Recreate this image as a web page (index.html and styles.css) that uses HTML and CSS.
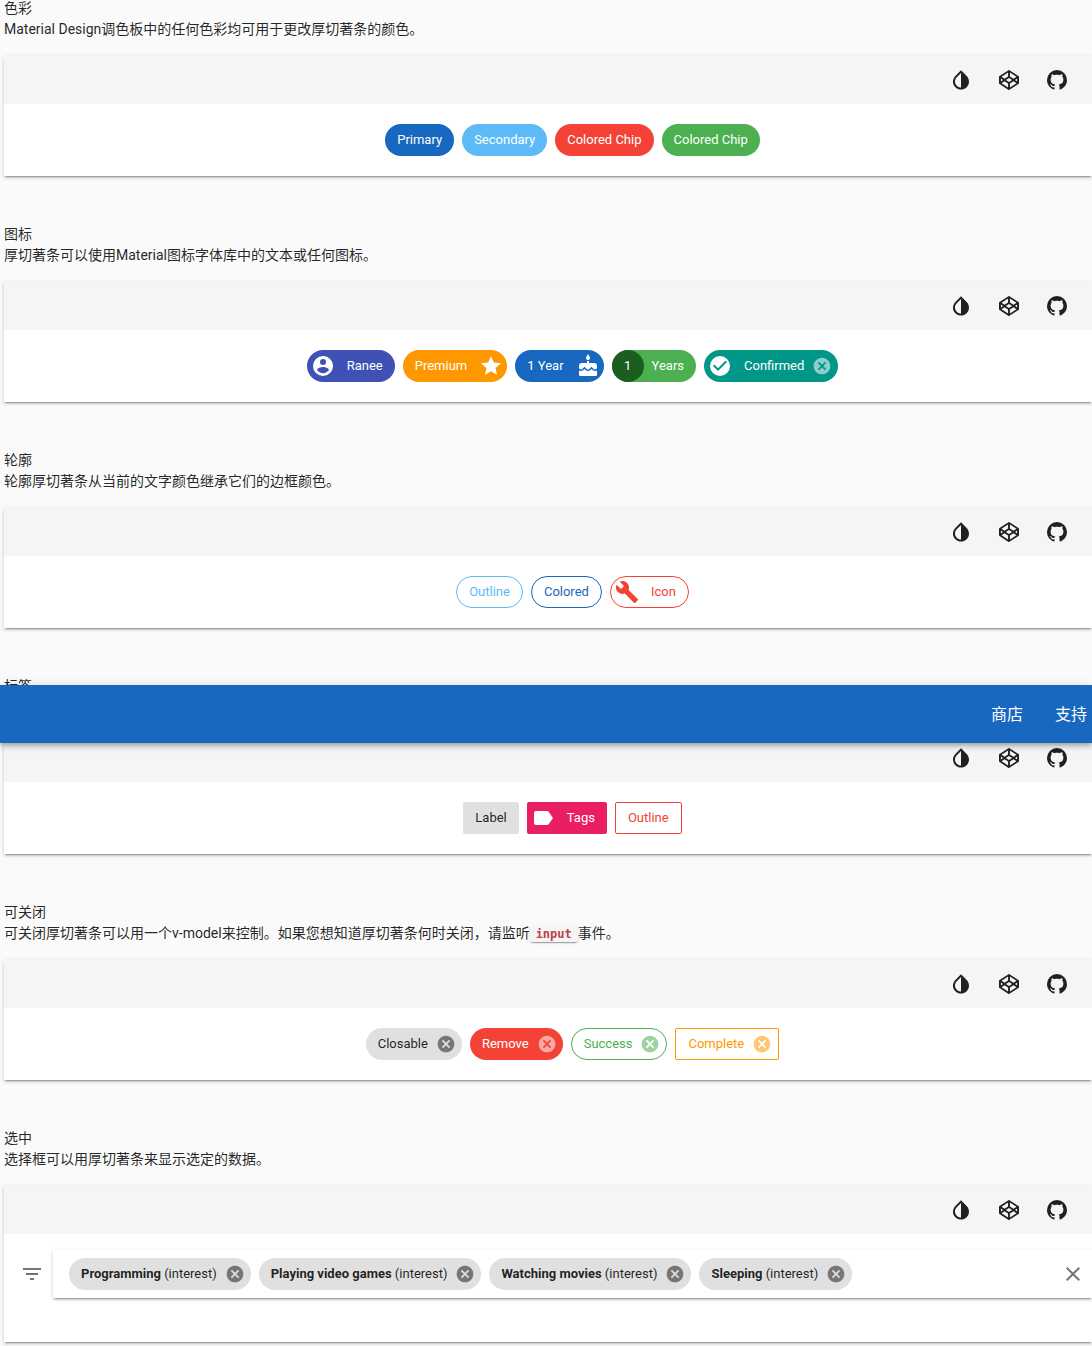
FILE: index.html
```html
<!DOCTYPE html>
<html lang="zh">
<head>
<meta charset="utf-8">
<title>厚切著条</title>
<link rel="stylesheet" href="styles.css">
</head>
<body>
<svg class="defs" width="0" height="0" aria-hidden="true">
  <symbol id="i-invert" viewBox="0 0 24 24"><path d="M12,19.58V19.58C10.4,19.58 8.89,18.96 7.76,17.83C6.62,16.69 6,15.19 6,13.58C6,12 6.62,10.47 7.76,9.34L12,5.1M17.66,7.93L12,2.27V2.27L6.34,7.93C3.22,11.05 3.22,16.12 6.34,19.24C7.9,20.8 9.95,21.58 12,21.58C14.05,21.58 16.1,20.8 17.66,19.24C20.78,16.12 20.78,11.05 17.66,7.93Z"/></symbol>
  <symbol id="i-codepen" viewBox="0 0 24 24"><path d="M15.09,12L12,14.08V14.08L8.91,12L12,9.92V9.92L15.09,12M12,2C11.84,2 11.68,2.06 11.53,2.15L2.5,8.11C2.27,8.22 2.09,8.43 2,8.67V14.92C2,15.33 2,15.33 2.15,15.53C2.25,15.69 2.39,15.84 2.53,15.94L11.53,21.89C11.67,22 11.84,22 12,22C12.16,22 12.33,21.96 12.47,21.85L21.47,15.91C21.61,15.81 21.75,15.66 21.85,15.5C22,15.31 22,15.31 22,14.92V8.67C21.91,8.43 21.73,8.22 21.5,8.11L12.47,2.15C12.32,2.06 12.16,2 12,2M12.94,4.5L19.5,8.84L16.5,10.87L12.94,8.5V4.5M11.06,4.5V8.5L7.5,10.87L4.5,8.84L11.06,4.5M20.09,10.62V13.38L18.03,12L20.09,10.62M3.91,10.62L5.97,12L3.91,13.38V10.62M16.5,13.13L19.5,15.16L12.94,19.5V15.5L16.5,13.13M7.5,13.13L11.06,15.5V19.5L4.5,15.16L7.5,13.13Z"/></symbol>
  <symbol id="i-github" viewBox="0 0 24 24"><path d="M12,2A10,10 0 0,0 2,12C2,16.42 4.87,20.17 8.84,21.5C9.34,21.58 9.5,21.27 9.5,21C9.5,20.77 9.5,20.14 9.5,19.31C6.73,19.91 6.14,17.97 6.14,17.97C5.68,16.81 5.03,16.5 5.03,16.5C4.12,15.88 5.1,15.9 5.1,15.9C6.1,15.97 6.63,16.93 6.63,16.93C7.5,18.45 8.97,18 9.54,17.76C9.63,17.11 9.89,16.67 10.17,16.42C7.95,16.17 5.62,15.31 5.62,11.5C5.62,10.39 6,9.5 6.65,8.79C6.55,8.54 6.2,7.5 6.75,6.15C6.75,6.15 7.59,5.88 9.5,7.17C10.29,6.95 11.15,6.84 12,6.84C12.85,6.84 13.71,6.95 14.5,7.17C16.41,5.88 17.25,6.15 17.25,6.15C17.8,7.5 17.45,8.54 17.35,8.79C18,9.5 18.38,10.39 18.38,11.5C18.38,15.32 16.04,16.16 13.81,16.41C14.17,16.72 14.5,17.33 14.5,18.26C14.5,19.6 14.5,20.68 14.5,21C14.5,21.27 14.66,21.59 15.17,21.5C19.14,20.16 22,16.42 22,12A10,10 0 0,0 12,2Z"/></symbol>
  <symbol id="i-account" viewBox="0 0 24 24"><path d="M12,19.2C9.5,19.2 7.29,17.92 6,16C6.03,14 10,12.9 12,12.9C14,12.9 17.97,14 18,16C16.71,17.92 14.5,19.2 12,19.2M12,5A3,3 0 0,1 15,8A3,3 0 0,1 12,11A3,3 0 0,1 9,8A3,3 0 0,1 12,5M12,2A10,10 0 0,0 2,12A10,10 0 0,0 12,22A10,10 0 0,0 22,12C22,6.47 17.5,2 12,2Z"/></symbol>
  <symbol id="i-star" viewBox="0 0 24 24"><path d="M12,17.27L18.18,21L16.54,13.97L22,9.24L14.81,8.62L12,2L9.19,8.62L2,9.24L7.45,13.97L5.82,21L12,17.27Z"/></symbol>
  <symbol id="i-cake" viewBox="0 0 24 24"><path d="M12,6C13.11,6 14,5.1 14,4C14,3.62 13.9,3.27 13.71,2.97L12,0L10.29,2.97C10.1,3.27 10,3.62 10,4A2,2 0 0,0 12,6M16.6,16L15.53,14.92L14.45,16C13.15,17.29 10.87,17.3 9.56,16L8.5,14.92L7.4,16C6.75,16.64 5.88,17 4.96,17C4.23,17 3.56,16.77 3,16.39V21A1,1 0 0,0 4,22H20A1,1 0 0,0 21,21V16.39C20.44,16.77 19.77,17 19.04,17C18.12,17 17.25,16.64 16.6,16M18,9H13V7H11V9H6A3,3 0 0,0 3,12V13.54C3,14.62 3.88,15.5 4.96,15.5C5.5,15.5 6,15.3 6.34,14.93L8.5,12.8L10.61,14.93C11.35,15.67 12.64,15.67 13.38,14.93L15.5,12.8L17.65,14.93C18,15.3 18.5,15.5 19.03,15.5C20.11,15.5 21,14.62 21,13.54V12A3,3 0 0,0 18,9Z"/></symbol>
  <symbol id="i-check" viewBox="0 0 24 24"><path d="M10,17L5,12L6.41,10.59L10,14.17L17.59,6.58L19,8M12,2A10,10 0 0,0 2,12A10,10 0 0,0 12,22A10,10 0 0,0 22,12A10,10 0 0,0 12,2Z"/></symbol>
  <symbol id="i-close-circle" viewBox="0 0 24 24"><path d="M12,2C17.53,2 22,6.47 22,12C22,17.53 17.53,22 12,22C6.47,22 2,17.53 2,12C2,6.47 6.47,2 12,2M15.59,7L12,10.59L8.41,7L7,8.41L10.59,12L7,15.59L8.41,17L12,13.41L15.59,17L17,15.59L13.41,12L17,8.41L15.59,7Z"/></symbol>
  <symbol id="i-wrench" viewBox="0 0 24 24"><path d="M22.7,19L13.6,9.9C14.5,7.6 14,4.9 12.1,3C10.1,1 7.1,0.6 4.7,1.7L9,6L6,9L1.6,4.7C0.4,7.1 0.9,10.1 2.9,12.1C4.8,14 7.5,14.5 9.8,13.6L18.9,22.7C19.3,23.1 19.9,23.1 20.3,22.7L22.6,20.4C23.1,20 23.1,19.3 22.7,19Z"/></symbol>
  <symbol id="i-label" viewBox="0 0 24 24"><path d="M17.63,5.84C17.27,5.33 16.67,5 16,5H5A2,2 0 0,0 3,7V17A2,2 0 0,0 5,19H16C16.67,19 17.27,18.66 17.63,18.15L22,12L17.63,5.84Z"/></symbol>
  <symbol id="i-filter" viewBox="0 0 24 24"><path d="M10 18h4v-2h-4v2zM3 6v2h18V6H3zm3 7h12v-2H6v2z"/></symbol>
  <symbol id="i-close" viewBox="0 0 24 24"><path d="M19,6.41L17.59,5L12,10.59L6.41,5L5,6.41L10.59,12L5,17.59L6.41,19L12,13.41L17.59,19L19,17.59L13.41,12L19,6.41Z"/></symbol>
</svg>

<main class="page">
  <section class="demo">
    <p>色彩</p>
    <p>Material Design调色板中的任何色彩均可用于更改厚切著条的颜色。</p>
    <div class="card">
      <div class="toolbar">
        <span class="tool"><svg class="icon"><use href="#i-invert"/></svg></span>
        <span class="tool"><svg class="icon"><use href="#i-codepen"/></svg></span>
        <span class="tool"><svg class="icon"><use href="#i-github"/></svg></span>
      </div>
      <div class="chips">
        <span class="chip primary">Primary</span>
        <span class="chip secondary">Secondary</span>
        <span class="chip red">Colored Chip</span>
        <span class="chip green">Colored Chip</span>
      </div>
    </div>
  </section>

  <section class="demo">
    <p>图标</p>
    <p>厚切著条可以使用Material图标字体库中的文本或任何图标。</p>
    <div class="card">
      <div class="toolbar">
        <span class="tool"><svg class="icon"><use href="#i-invert"/></svg></span>
        <span class="tool"><svg class="icon"><use href="#i-codepen"/></svg></span>
        <span class="tool"><svg class="icon"><use href="#i-github"/></svg></span>
      </div>
      <div class="chips">
        <span class="chip indigo lead"><svg class="icon gap-r"><use href="#i-account"/></svg>Ranee</span>
        <span class="chip orange trail">Premium<svg class="icon gap-l"><use href="#i-star"/></svg></span>
        <span class="chip primary trail">1 Year<svg class="icon gap-l"><use href="#i-cake"/></svg></span>
        <span class="chip green avatar-chip"><span class="avatar">1</span>Years</span>
        <span class="chip teal lead closable"><svg class="icon gap-r"><use href="#i-check"/></svg>Confirmed<svg class="close-icon"><use href="#i-close-circle"/></svg></span>
      </div>
    </div>
  </section>

  <section class="demo">
    <p>轮廓</p>
    <p>轮廓厚切著条从当前的文字颜色继承它们的边框颜色。</p>
    <div class="card">
      <div class="toolbar">
        <span class="tool"><svg class="icon"><use href="#i-invert"/></svg></span>
        <span class="tool"><svg class="icon"><use href="#i-codepen"/></svg></span>
        <span class="tool"><svg class="icon"><use href="#i-github"/></svg></span>
      </div>
      <div class="chips">
        <span class="chip outline t-secondary">Outline</span>
        <span class="chip outline t-primary">Colored</span>
        <span class="chip outline t-red lead"><svg class="icon gap-r"><use href="#i-wrench"/></svg>Icon</span>
      </div>
    </div>
  </section>

  <section class="demo">
    <p>标签</p>
    <p>标签厚切著条使用卡片的边框半径。</p>
    <div class="card">
      <div class="toolbar">
        <span class="tool"><svg class="icon"><use href="#i-invert"/></svg></span>
        <span class="tool"><svg class="icon"><use href="#i-codepen"/></svg></span>
        <span class="tool"><svg class="icon"><use href="#i-github"/></svg></span>
      </div>
      <div class="chips">
        <span class="chip grey label">Label</span>
        <span class="chip pink label lead"><svg class="icon gap-r"><use href="#i-label"/></svg>Tags</span>
        <span class="chip outline t-red label">Outline</span>
      </div>
    </div>
  </section>

  <section class="demo">
    <p>可关闭</p>
    <p>可关闭厚切著条可以用一个v-model来控制。如果您想知道厚切著条何时关闭，请监听<code class="code">input</code>事件。</p>
    <div class="card">
      <div class="toolbar">
        <span class="tool"><svg class="icon"><use href="#i-invert"/></svg></span>
        <span class="tool"><svg class="icon"><use href="#i-codepen"/></svg></span>
        <span class="tool"><svg class="icon"><use href="#i-github"/></svg></span>
      </div>
      <div class="chips">
        <span class="chip grey closable">Closable<svg class="close-icon"><use href="#i-close-circle"/></svg></span>
        <span class="chip red closable">Remove<svg class="close-icon"><use href="#i-close-circle"/></svg></span>
        <span class="chip outline t-green closable">Success<svg class="close-icon"><use href="#i-close-circle"/></svg></span>
        <span class="chip outline t-orange label closable">Complete<svg class="close-icon"><use href="#i-close-circle"/></svg></span>
      </div>
    </div>
  </section>

  <section class="demo">
    <p>选中</p>
    <p>选择框可以用厚切著条来显示选定的数据。</p>
    <div class="card">
      <div class="toolbar">
        <span class="tool"><svg class="icon"><use href="#i-invert"/></svg></span>
        <span class="tool"><svg class="icon"><use href="#i-codepen"/></svg></span>
        <span class="tool"><svg class="icon"><use href="#i-github"/></svg></span>
      </div>
      <div class="select-row">
        <svg class="icon muted"><use href="#i-filter"/></svg>
        <div class="field">
          <span class="chip grey closable"><span><b class="strong">Programming</b> (interest)</span><svg class="close-icon"><use href="#i-close-circle"/></svg></span>
          <span class="chip grey closable"><span><b class="strong">Playing video games</b> (interest)</span><svg class="close-icon"><use href="#i-close-circle"/></svg></span>
          <span class="chip grey closable"><span><b class="strong">Watching movies</b> (interest)</span><svg class="close-icon"><use href="#i-close-circle"/></svg></span>
          <span class="chip grey closable"><span><b class="strong">Sleeping</b> (interest)</span><svg class="close-icon"><use href="#i-close-circle"/></svg></span>
          <svg class="icon muted clear"><use href="#i-close"/></svg>
        </div>
      </div>
    </div>
  </section>
</main>

<header class="appbar">
  <span>商店</span>
  <span>支持</span>
</header>
</body>
</html>
```
FILE: styles.css
```css
html, body {
  margin: 0;
  height: 100%;
  overflow: hidden;
}

body {
  position: relative;
  background: #fafafa;
  color: rgba(0, 0, 0, 0.87);
  font: 14px/21px Roboto, "Noto Sans CJK SC", sans-serif;
}

.defs {
  position: absolute;
}

.page {
  padding-left: 4px;
  margin-top: -2px;
}

.demo {
  margin-bottom: 48px;
}

.demo p {
  margin: 0;
}

.card {
  margin-top: 16px;
  background: #fff;
  box-shadow: 0 3px 1px -2px rgba(0, 0, 0, 0.2), 0 2px 2px 0 rgba(0, 0, 0, 0.14), 0 1px 5px 0 rgba(0, 0, 0, 0.12);
}

.toolbar {
  display: flex;
  justify-content: flex-end;
  height: 48px;
  padding-right: 11px;
  background: #f5f5f5;
}

.tool {
  display: flex;
  align-items: center;
  justify-content: center;
  width: 48px;
}

.icon {
  flex: none;
  width: 24px;
  height: 24px;
  fill: currentColor;
}

.chips {
  display: flex;
  justify-content: center;
  gap: 8px;
  padding: 20px 0 20px 49px;
}

.chip {
  display: inline-flex;
  align-items: center;
  box-sizing: border-box;
  height: 32px;
  padding: 0 12px;
  border-radius: 16px;
  font-size: 13px;
  line-height: 20px;
  white-space: nowrap;
  color: #fff;
}

.primary { background: #1867c0; }
.secondary { background: #5cbbf6; }
.red { background: #f44336; }
.green { background: #4caf50; }
.indigo { background: #3f51b5; }
.orange { background: #ff9800; }
.teal { background: #009688; }
.pink { background: #e91e63; }
.grey { background: #e0e0e0; color: rgba(0, 0, 0, 0.87); }

.outline { background: transparent; border: 1px solid currentColor; }
.t-primary { color: #1867c0; }
.t-secondary { color: #5cbbf6; }
.t-red { color: #f44336; }
.t-green { color: #4caf50; }
.t-orange { color: #ff9800; }

.label { border-radius: 2px; }
.lead { padding-left: 4px; }
.trail { padding-right: 4px; }
.closable { padding-right: 6px; }
.avatar-chip { padding-left: 0; }

.gap-r { margin-right: 12px; }
.gap-l { margin-left: 12px; }

.avatar {
  display: flex;
  align-items: center;
  justify-content: center;
  width: 32px;
  height: 32px;
  margin-right: 8px;
  border-radius: 50%;
  background: #1b5e20;
  color: #fff;
}

.close-icon {
  flex: none;
  width: 20px;
  height: 20px;
  margin-left: 8px;
  fill: currentColor;
  opacity: 0.54;
}

.code {
  padding: 1px 6px;
  border-radius: 3px;
  background: #f5f5f5;
  color: #bd4147;
  font: bold 12px/1 "DejaVu Sans Mono", "Liberation Mono", monospace;
  box-shadow: 0 2px 1px -1px rgba(0, 0, 0, 0.2), 0 1px 1px 0 rgba(0, 0, 0, 0.14), 0 1px 3px 0 rgba(0, 0, 0, 0.12);
}

.select-row {
  display: flex;
  align-items: center;
  gap: 9px;
  padding: 16px 0 44px 16px;
}

.muted {
  color: rgba(0, 0, 0, 0.54);
}

.field {
  display: flex;
  flex: 1;
  align-items: center;
  gap: 8px;
  height: 48px;
  padding: 0 7px 0 16px;
  background: #fff;
  box-shadow: 0 3px 1px -2px rgba(0, 0, 0, 0.2), 0 2px 2px 0 rgba(0, 0, 0, 0.14), 0 1px 5px 0 rgba(0, 0, 0, 0.12);
}

.strong {
  font-weight: 700;
}

.clear {
  margin-left: auto;
}

.appbar {
  position: absolute;
  top: 685px;
  left: 0;
  right: 0;
  display: flex;
  align-items: center;
  justify-content: flex-end;
  gap: 32px;
  height: 58px;
  padding-right: 5px;
  background: #1867c0;
  color: #fff;
  font-size: 16px;
  box-shadow: 0 2px 4px -1px rgba(0, 0, 0, 0.2), 0 4px 5px 0 rgba(0, 0, 0, 0.14), 0 1px 10px 0 rgba(0, 0, 0, 0.12);
}
```
